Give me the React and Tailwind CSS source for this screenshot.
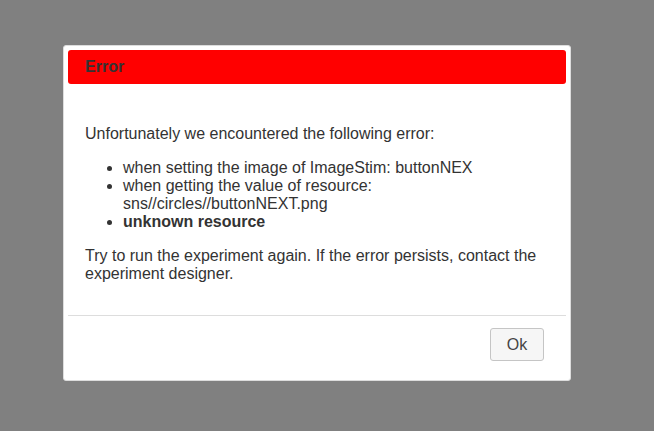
import React from 'react';

const App = () => {
    return (
        <div
            className="w-[654px] h-[431px] bg-[#808080] pl-[63px] pt-[45px] overflow-hidden"
            style={{ fontFamily: '"Liberation Sans", Arial, sans-serif' }}
        >
            <div className="w-[508px] h-[336px] bg-white border border-[#dddddd] rounded-[3px] p-1 flex flex-col">
                <div className="h-[34px] bg-[#ff0000] rounded-[3px] flex items-center pl-[17px]">
                    <span className="text-[16px] leading-[18px] font-bold text-[#333333]">Error</span>
                </div>
                <div className="pt-[41px] pb-[32px] px-[17px] text-[16px] leading-[18px] text-[#333333]">
                    <p>Unfortunately we encountered the following error:</p>
                    <ul className="list-disc pl-[38px] my-4">
                        <li>when setting the image of ImageStim: buttonNEX</li>
                        <li>when getting the value of resource: sns//circles//buttonNEXT.png</li>
                        <li className="font-bold">unknown resource</li>
                    </ul>
                    <p>Try to run the experiment again. If the error persists, contact the experiment designer.</p>
                </div>
                <div className="border-t border-[#dddddd] pt-[12px] pr-[22px] flex justify-end">
                    <button
                        type="button"
                        className="w-[54px] h-[33px] bg-[#f6f6f6] border border-[#c5c5c5] rounded-[3px] text-[16px] text-[#454545]"
                    >
                        Ok
                    </button>
                </div>
            </div>
        </div>
    );
};

export default App;
